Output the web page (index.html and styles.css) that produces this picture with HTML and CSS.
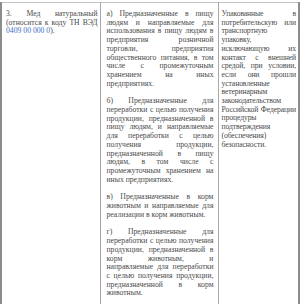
FILE: index.html
```html
<!DOCTYPE html>
<html lang="ru">
<head>
<meta charset="utf-8">
<link rel="stylesheet" href="styles.css">
</head>
<body>
<table class="grid">
  <colgroup>
    <col class="col-name">
    <col class="col-purpose">
    <col class="col-cond">
  </colgroup>
  <tr>
    <td class="cell cell-name"><p>3. Мед натуральный (относится к коду ТН ВЭД <a class="code">0409 00 000 0</a>).</p></td>
    <td class="cell cell-purpose">
      <p>а) Предназначенные в пищу людям и направляемые для использования в пищу людям в предприятия розничной торговли, предприятия общественного питания, в том числе с промежуточным хранением на иных предприятиях.</p>
      <p>б) Предназначенные для переработки с целью получения продукции, предназначенной в пищу людям, и направляемые для переработки с целью получения продукции, предназначенной в пищу людям, в том числе с промежуточным хранением на иных предприятиях.</p>
      <p>в) Предназначенные в корм животным и направляемые для реализации в корм животным.</p>
      <p>г) Предназначенные для переработки с целью получения продукции, предназначенной в корм животным, и направляемые для переработки с целью получения продукции, предназначенной в корм животным.</p>
    </td>
    <td class="cell cell-cond"><p>Упакованные в потребительскую или транспортную упаковку, исключающую их контакт с внешней средой, при условии, если они прошли установленные ветеринарным законодательством Российской Федерации процедуры подтверждения (обеспечения) безопасности.</p></td>
  </tr>
</table>
</body>
</html>
```

FILE: styles.css
```css
html, body {
  margin: 0;
  padding: 0;
  background: #fff;
}
body {
  padding-top: 2px;
  font-family: "Liberation Serif", "Times New Roman", serif;
  font-size: 7.7px;
  line-height: 8.7px;
  color: #4a4a4a;
}
.grid {
  width: 298px;
  table-layout: fixed;
  border-collapse: collapse;
  border-top: 1px solid #c4c4c4;
}
.col-name { width: 99px; }
.col-purpose { width: 118px; }
.col-cond { width: 81px; }
.cell {
  vertical-align: top;
  padding: 7px 3px 20px 4px;
  border-left: 1px solid #a8a8a8;
}
.cell-name {
  border-left: 2px solid #8c8c8c;
  padding-left: 4px;
  padding-right: 2px;
}
.cell-purpose {
  padding-left: 6px;
  padding-right: 4px;
}
.cell-cond {
  border-right: 2px solid #8c8c8c;
  padding-left: 3px;
  padding-right: 2px;
  letter-spacing: -0.12px;
}
.cell p {
  margin: 0;
  text-align: justify;
}
.cell-purpose p + p {
  margin-top: 9px;
}
.code {
  color: #3d6fc6;
  text-decoration: none;
}
```
